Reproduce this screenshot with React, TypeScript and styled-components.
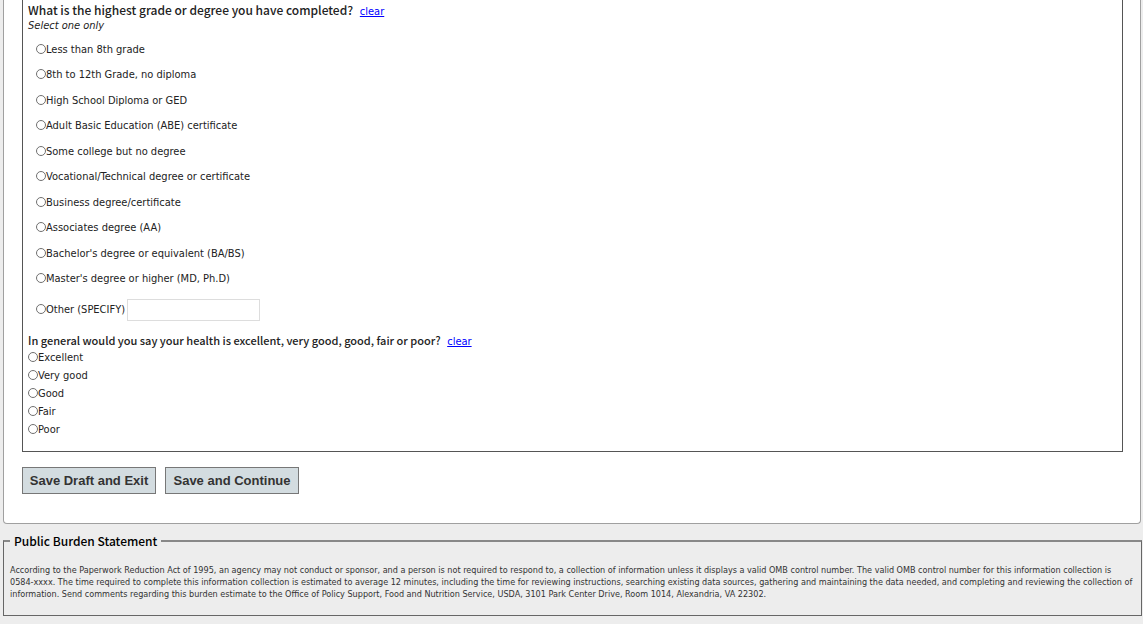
import React, { useState } from "react";
import styled, { createGlobalStyle } from "styled-components";

const headingFont = `"Noto Sans CJK SC", "Open Sans", sans-serif`;

const GlobalStyle = createGlobalStyle`
  *, *::before, *::after { box-sizing: border-box; }
  body {
    margin: 0;
    background: #ededed;
    color: #222;
    font-family: "DejaVu Sans Condensed", "Open Sans", sans-serif;
    font-size: 11px;
    line-height: 16px;
  }
`;

const Page = styled.div`
  padding: 0 1px 8px 3px;
`;

const Card = styled.main`
  margin-right: 1px;
  padding: 0 17px 29px 18px;
  background: #fff;
  border: 1px solid #a0a0a0;
  border-top: 0;
  border-radius: 0 0 4px 4px;
`;

const Survey = styled.div`
  padding: 2px 5px 12px;
  border: 1px solid #555;
  border-top: 0;
`;

const Question = styled.fieldset`
  margin: 0;
  padding: 0;
  border: 0;
  min-width: 0;
`;

const Heading = styled.legend<{ $large?: boolean }>`
  padding: 0;
  font-family: ${headingFont};
  font-size: ${(p) => (p.$large ? 12 : 11)}px;
  font-weight: 500;
  line-height: 16px;
`;

const Clear = styled.a`
  margin-left: 4px;
  color: #00f;
  font-family: "DejaVu Sans Condensed", "Open Sans", sans-serif;
  font-size: 11px;
  font-weight: 400;
  line-height: 12px;
`;

const Hint = styled.em`
  display: block;
`;

const DegreeList = styled.div`
  display: grid;
  grid-auto-rows: 1fr;
  height: 255px;
  margin: 3px 0 0 8px;
`;

const HealthList = styled.div`
  display: grid;
  grid-auto-rows: 18px;
  margin-top: 1px;
`;

const Option = styled.label`
  display: flex;
  align-items: center;
`;

const Radio = styled.input`
  appearance: none;
  flex: none;
  width: 10px;
  height: 10px;
  margin: 0 0 2px;
  border: 1px solid #707070;
  border-radius: 50%;
  background: #fff;
  &:checked { box-shadow: inset 0 0 0 2px #fff; background: #222; }
`;

const OtherRow = styled.div`
  display: flex;
  align-items: center;
  gap: 2px;
  margin: 7px 0 11px 8px;
`;

const TextBox = styled.input`
  width: 133px;
  height: 22px;
  padding: 2px 4px;
  border: 1px solid #ddd;
  background: #fff;
  font: inherit;
`;

const Actions = styled.div`
  display: flex;
  gap: 9px;
  margin-top: 15px;
`;

const Button = styled.button`
  min-width: 134px;
  height: 27px;
  padding: 0 6px;
  border: 1px solid #777;
  border-radius: 0;
  background: #d3dce0;
  color: #333;
  font: bold 13px "Liberation Sans", Arial, sans-serif;
`;

const Burden = styled.fieldset`
  min-width: 0;
  margin: 8px 0 0;
  padding: 14px 6px 15px;
  border: 1px solid #666;
  border-top: 2px solid #888;
  font-size: 9px;
  line-height: 12px;
  color: #333;
`;

const BurdenTitle = styled.legend`
  padding: 0 4px;
  color: #000;
  font-family: ${headingFont};
  font-size: 12px;
  font-weight: 500;
  line-height: 18px;
`;

const BurdenText = styled.p`
  margin: 0;
`;

const degrees = [
  "Less than 8th grade",
  "8th to 12th Grade, no diploma",
  "High School Diploma or GED",
  "Adult Basic Education (ABE) certificate",
  "Some college but no degree",
  "Vocational/Technical degree or certificate",
  "Business degree/certificate",
  "Associates degree (AA)",
  "Bachelor's degree or equivalent (BA/BS)",
  "Master's degree or higher (MD, Ph.D)",
];
const healthLevels = ["Excellent", "Very good", "Good", "Fair", "Poor"];

type ChoiceProps = { group: string; text: string; value: string; onPick: (v: string) => void };

function Choice({ group, text, value, onPick }: ChoiceProps) {
  return (
    <Option>
      <Radio type="radio" name={group} checked={value === text} onChange={() => onPick(text)} />
      {text}
    </Option>
  );
}

function ClearLink({ onClear }: { onClear: () => void }) {
  return (
    <Clear href="#clear" onClick={(e) => { e.preventDefault(); onClear(); }}>clear</Clear>
  );
}

export default function App() {
  const [degree, setDegree] = useState("");
  const [health, setHealth] = useState("");
  return (
    <Page>
      <GlobalStyle />
      <Card>
        <Survey>
          <Question>
            <Heading $large>
              What is the highest grade or degree you have completed?{" "}
              <ClearLink onClear={() => setDegree("")} />
            </Heading>
            <Hint>Select one only</Hint>
            <DegreeList>
              {degrees.map((d) => (
                <Choice key={d} group="degree" text={d} value={degree} onPick={setDegree} />
              ))}
            </DegreeList>
            <OtherRow>
              <Choice group="degree" text="Other (SPECIFY)" value={degree} onPick={setDegree} />
              <TextBox type="text" aria-label="Other, specify" />
            </OtherRow>
          </Question>
          <Question>
            <Heading>
              In general would you say your health is excellent, very good, good, fair or poor?{" "}
              <ClearLink onClear={() => setHealth("")} />
            </Heading>
            <HealthList>
              {healthLevels.map((h) => (
                <Choice key={h} group="health" text={h} value={health} onPick={setHealth} />
              ))}
            </HealthList>
          </Question>
        </Survey>
        <Actions>
          <Button type="button">Save Draft and Exit</Button>
          <Button type="button">Save and Continue</Button>
        </Actions>
      </Card>
      <Burden>
        <BurdenTitle>Public Burden Statement</BurdenTitle>
        <BurdenText>
          According to the Paperwork Reduction Act of 1995, an agency may not conduct or sponsor, and a person is not
          required to respond to, a collection of information unless it displays a valid OMB control number. The valid
          OMB control number for this information collection is 0584-xxxx. The time required to complete this
          information collection is estimated to average 12 minutes, including the time for reviewing instructions,
          searching existing data sources, gathering and maintaining the data needed, and completing and reviewing the
          collection of information. Send comments regarding this burden estimate to the Office of Policy Support,
          Food and Nutrition Service, USDA, 3101 Park Center Drive, Room 1014, Alexandria, VA 22302.
        </BurdenText>
      </Burden>
    </Page>
  );
}
